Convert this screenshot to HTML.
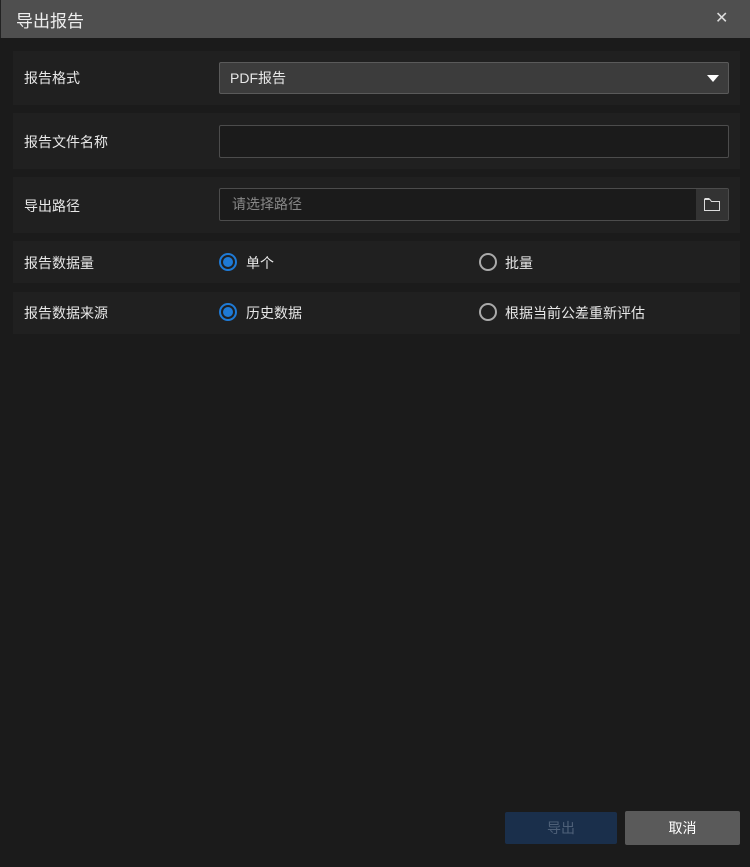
<!DOCTYPE html>
<html><head><meta charset="utf-8"><style>
*{box-sizing:border-box;margin:0;padding:0}
body{width:750px;height:867px;background:#1b1b1b;font-family:"Liberation Sans","Noto Sans CJK SC",sans-serif;color:#e8e8e8;font-size:14px;position:relative;overflow:hidden}
.title{position:absolute;left:0;top:0;width:750px;height:38px;background:#4f4f4f;border-left:1px solid #222}
.title span{position:absolute;left:15px;top:7px;font-size:17px;color:#eee}
.x{position:absolute;left:714px;top:8px;font-size:16px;color:#ddd}
.row{position:absolute;left:13px;width:727px;background:#202020}
.lab{position:absolute;left:11px;font-size:14px}
.box{position:absolute;left:206px;width:510px;height:32px;border:1px solid #4c4c4c;border-radius:2px}
.radio{position:absolute;width:18px;height:18px;border-radius:50%;border:2px solid #aaa}
.radio.on{border-color:#1e7ad6}
.radio.on::after{content:"";position:absolute;left:2px;top:2px;width:10px;height:10px;border-radius:50%;background:#1e7ad6}
.rt{position:absolute;font-size:14px}
.btn{position:absolute;font-size:14px;text-align:center;border-radius:2px}
</style></head><body>
<div class="title"><span>导出报告</span><div class="x">✕</div></div>

<div class="row" style="top:51px;height:54px">
<div class="lab" style="top:17px">报告格式</div>
<div class="box" style="top:11px;height:32px;background:#3c3c3c;border-color:#5a5a5a"><span style="position:absolute;left:10px;top:5px">PDF报告</span>
<svg style="position:absolute;left:486px;top:11px" width="14" height="9"><path d="M1 1h12l-6 7z" fill="#fff"/></svg></div>
</div>

<div class="row" style="top:113px;height:56px">
<div class="lab" style="top:19px">报告文件名称</div>
<div class="box" style="top:12px;height:33px;background:#1b1b1b"></div>
</div>

<div class="row" style="top:177px;height:56px">
<div class="lab" style="top:19px">导出路径</div>
<div class="box" style="top:11px;height:33px;background:#1b1b1b"><span style="position:absolute;left:12px;top:5px;color:#888">请选择路径</span>
<div style="position:absolute;right:0;top:0;width:32px;height:31px;background:#333">
<svg style="position:absolute;left:7px;top:7px" width="18" height="16"><path d="M1.5 4.5v10h15v-9h-8l-1.5-2h-5.5z M1.5 2.5h5" fill="none" stroke="#ddd" stroke-width="1"/></svg></div></div>
</div>

<div class="row" style="top:241px;height:42px">
<div class="lab" style="top:12px">报告数据量</div>
<div class="radio on" style="left:206px;top:12px"></div><div class="rt" style="left:233px;top:12px">单个</div>
<div class="radio" style="left:466px;top:12px"></div><div class="rt" style="left:492px;top:12px">批量</div>
</div>

<div class="row" style="top:292px;height:42px">
<div class="lab" style="top:11px">报告数据来源</div>
<div class="radio on" style="left:206px;top:11px"></div><div class="rt" style="left:233px;top:11px">历史数据</div>
<div class="radio" style="left:466px;top:11px"></div><div class="rt" style="left:492px;top:11px">根据当前公差重新评估</div>
</div>

<div class="btn" style="left:505px;top:812px;width:112px;height:32px;line-height:32px;background:#1a2f4b;color:#4e6078">导出</div>
<div class="btn" style="left:625px;top:811px;width:115px;height:34px;line-height:34px;background:#5a5a5a;color:#fff">取消</div>
</body></html>
